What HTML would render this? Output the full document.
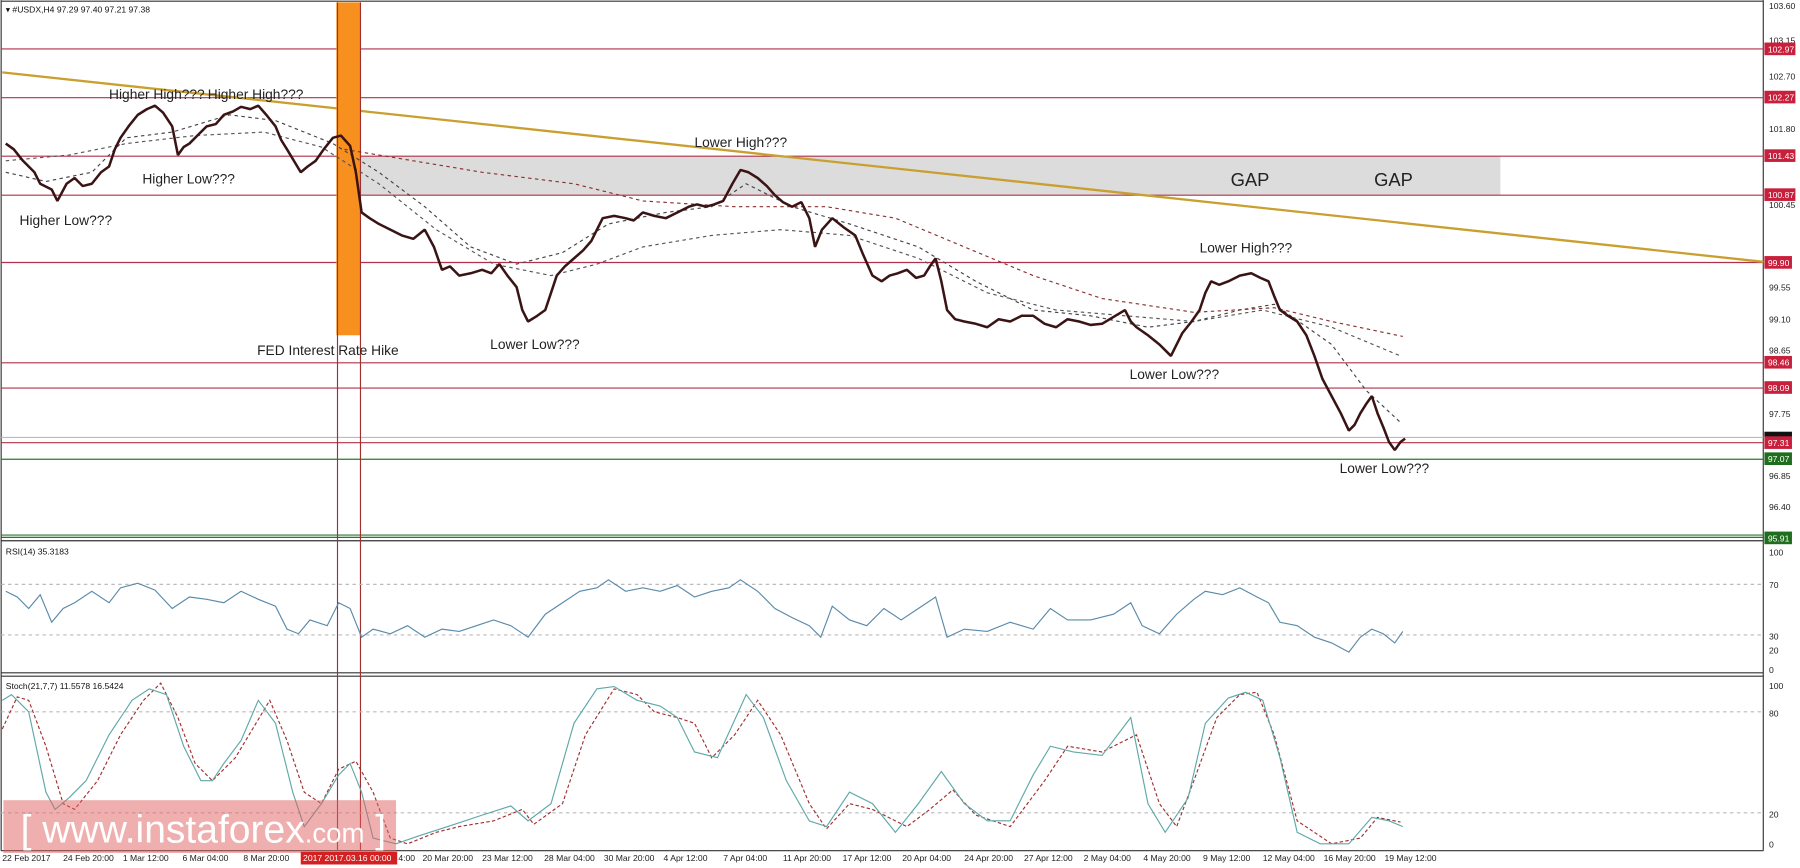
<!DOCTYPE html>
<html><head><meta charset="utf-8"><style>
html,body{margin:0;padding:0;background:#fff;width:1800px;height:868px;overflow:hidden}
svg{display:block}
text{font-family:"Liberation Sans",sans-serif}
</style></head><body>
<svg width="1800" height="868" viewBox="0 0 1568 756" xmlns="http://www.w3.org/2000/svg">
<rect width="1568" height="756" fill="#fff"/>
<g stroke="#333" stroke-width="1" fill="none">
<line x1="1536" y1="0" x2="1536" y2="741"/>
<line x1="1" y1="0" x2="1" y2="741"/>
<line x1="1" y1="741" x2="1536" y2="741"/>
<line x1="1" y1="1" x2="1536" y2="1"/>
</g>
<line x1="1" y1="468" x2="1536" y2="468" stroke="#1a5a1a" stroke-width="1"/>
<line x1="1" y1="471" x2="1536" y2="471" stroke="#333"/>
<line x1="1" y1="586" x2="1536" y2="586" stroke="#333"/>
<line x1="1" y1="589" x2="1536" y2="589" stroke="#333"/>

<rect x="314" y="136" width="993" height="34" fill="#dcdcdc"/>
<g stroke="#b0324a" stroke-width="1">
<line x1="1" y1="42.6" x2="1536" y2="42.6"/>
<line x1="1" y1="85" x2="1536" y2="85"/>
<line x1="1" y1="136" x2="1536" y2="136"/>
<line x1="1" y1="170" x2="1536" y2="170"/>
<line x1="1" y1="228.6" x2="1536" y2="228.6"/>
<line x1="1" y1="316" x2="1536" y2="316"/>
<line x1="1" y1="338" x2="1536" y2="338"/>
<line x1="1" y1="385.6" x2="1536" y2="385.6"/>
</g>
<line x1="1" y1="381" x2="1536" y2="381" stroke="#bbb"/>
<line x1="1" y1="400" x2="1536" y2="400" stroke="#2a7a2a"/>
<line x1="1" y1="466" x2="1536" y2="466" stroke="#2a7a2a"/>
<line x1="2" y1="63" x2="1536" y2="228" stroke="#c9a030" stroke-width="2"/>
<rect x="293" y="2" width="21" height="290" fill="#f7901e"/>
<g stroke="#a03030" stroke-width="1">
<line x1="294" y1="2" x2="294" y2="741"/>
<line x1="314" y1="2" x2="314" y2="741"/>
</g>
<g fill="none" stroke-dasharray="3,3" stroke-width="1">
<polyline stroke="#444" points="5,150 40,158 80,150 110,120 150,115 200,100 240,105 290,125 330,150 370,180 410,215 450,230 490,220 530,195 580,185 620,180 650,160 690,180 740,195 800,215 850,245 900,270 950,275 1000,285 1040,280 1080,270 1110,265 1160,300 1190,340 1220,368"/>
<polyline stroke="#555" points="5,140 60,135 110,125 170,118 230,115 280,128 330,160 380,200 430,230 480,240 520,230 560,215 620,205 680,200 740,205 800,225 860,255 920,270 980,275 1040,280 1100,270 1160,285 1220,310"/>
<polyline stroke="#8a3030" points="300,130 360,140 420,150 500,160 560,175 640,180 720,180 780,190 840,215 900,240 960,260 1040,272 1110,268 1160,280 1222,293"/>
</g>
<polyline fill="none" stroke="#3a1414" stroke-width="2.2" stroke-linejoin="bevel" points="5,125 12,130 20,140 30,150 35,160 45,165 50,175 58,160 65,155 72,162 80,160 88,150 95,145 100,130 105,120 112,110 120,100 128,95 135,92 142,98 150,110 155,135 160,128 165,125 172,118 180,110 188,108 195,100 203,97 210,93 218,95 225,92 232,100 240,110 245,122 250,130 256,140 262,150 268,145 275,140 282,130 290,120 297,118 305,127 310,150 315,185 322,190 330,195 340,200 350,205 360,208 370,200 378,215 385,235 392,232 400,240 410,238 420,235 428,238 435,230 442,240 450,250 455,270 460,280 468,275 475,270 480,255 485,240 492,232 500,225 508,218 515,210 520,200 525,190 535,188 545,190 552,192 560,185 570,188 580,190 590,185 600,180 607,178 615,180 622,178 630,175 638,160 645,148 652,150 660,155 668,162 675,170 682,176 690,180 698,176 705,190 708,205 710,215 716,200 725,190 735,198 745,205 752,222 760,240 768,245 775,240 782,238 790,235 798,242 805,240 810,232 815,225 820,245 825,270 832,278 840,280 850,282 860,285 870,278 880,280 890,275 900,275 910,282 920,285 930,278 940,280 950,283 960,282 970,276 980,270 985,280 990,285 1000,292 1010,300 1015,305 1020,310 1025,300 1030,290 1038,280 1045,270 1050,255 1055,245 1062,248 1070,245 1080,240 1090,238 1098,242 1105,245 1110,258 1115,270 1122,275 1130,280 1138,292 1145,310 1152,330 1160,345 1168,360 1175,375 1180,370 1185,360 1190,352 1195,345 1200,360 1205,372 1210,385 1215,392 1220,385 1224,382"/>

<g font-size="12" fill="#222">
<text x="95" y="86">Higher High???</text>
<text x="181" y="86">Higher High???</text>
<text x="124" y="160">Higher Low???</text>
<text x="17" y="196">Higher Low???</text>
<text x="605" y="128">Lower High???</text>
<text x="1045" y="220">Lower High???</text>
<text x="427" y="304">Lower Low???</text>
<text x="984" y="330">Lower Low???</text>
<text x="1167" y="412">Lower Low???</text>
<text x="224" y="309">FED Interest Rate Hike</text>
</g>
<g font-size="16" fill="#222">
<text x="1072" y="162">GAP</text>
<text x="1197" y="162">GAP</text>
</g>
<text x="5" y="11" font-size="7.5" fill="#111">▾ #USDX,H4  97.29 97.40 97.21 97.38</text>

<g font-size="7.5" fill="#222">
<text x="1541" y="8">103.60</text>
<text x="1541" y="38">103.15</text>
<text x="1541" y="69">102.70</text>
<text x="1541" y="115">101.80</text>
<text x="1541" y="181">100.45</text>
<text x="1541" y="253">99.55</text>
<text x="1541" y="281">99.10</text>
<text x="1541" y="308">98.65</text>
<text x="1541" y="363">97.75</text>
<text x="1541" y="417">96.85</text>
<text x="1541" y="444">96.40</text>
<text x="1541" y="484">100</text>
<text x="1541" y="512">70</text>
<text x="1541" y="557">30</text>
<text x="1541" y="569">20</text>
<text x="1541" y="586">0</text>
<text x="1541" y="600">100</text>
<text x="1541" y="624">80</text>
<text x="1541" y="712">20</text>
<text x="1541" y="738">0</text>
</g>
<g font-size="7.5" fill="#fff">
<rect x="1537" y="37" width="27" height="11" fill="#c8203c"/><text x="1540" y="45.5">102.97</text>
<rect x="1537" y="79" width="27" height="11" fill="#c8203c"/><text x="1540" y="87.5">102.27</text>
<rect x="1537" y="130" width="27" height="11" fill="#c8203c"/><text x="1540" y="138.5">101.43</text>
<rect x="1537" y="164" width="27" height="11" fill="#c8203c"/><text x="1540" y="172.5">100.87</text>
<rect x="1537" y="223" width="24" height="11" fill="#c8203c"/><text x="1540" y="231.5">99.90</text>
<rect x="1537" y="310" width="24" height="11" fill="#c8203c"/><text x="1540" y="318.5">98.46</text>
<rect x="1537" y="332" width="24" height="11" fill="#c8203c"/><text x="1540" y="340.5">98.09</text>
<rect x="1537" y="376" width="24" height="6" fill="#111"/>
<rect x="1537" y="380" width="24" height="11" fill="#c8203c"/><text x="1540" y="388.5">97.31</text>
<rect x="1537" y="394" width="24" height="11" fill="#1e6e1e"/><text x="1540" y="402.5">97.07</text>
<rect x="1537" y="463" width="24" height="11" fill="#1e6e1e"/><text x="1540" y="471.5">95.91</text>
</g>

<g stroke="#bbb" stroke-dasharray="3,3"><line x1="1" y1="509" x2="1536" y2="509"/><line x1="1" y1="553" x2="1536" y2="553"/></g>
<text x="5" y="483" font-size="7.5" fill="#111">RSI(14) 35.3183</text>
<polyline fill="none" stroke="#5a8aaa" stroke-width="1" points="5,515 15,520 25,530 35,518 45,542 55,530 65,525 80,515 95,525 105,512 120,508 135,514 150,530 165,520 180,522 195,525 210,515 225,522 240,528 250,548 260,552 270,540 285,545 295,525 305,530 315,555 325,548 340,552 355,545 370,555 385,548 400,550 415,545 430,540 445,545 460,555 475,535 490,525 505,515 520,512 530,505 545,515 560,512 575,515 590,510 605,520 620,515 635,512 645,505 660,515 675,530 690,538 705,545 715,555 725,528 740,540 755,545 770,530 785,540 800,530 815,520 825,555 840,548 860,550 880,542 900,548 915,530 930,540 950,540 970,535 985,525 995,545 1010,552 1025,535 1040,522 1050,515 1065,518 1080,512 1095,520 1105,525 1115,542 1130,545 1145,555 1160,560 1175,568 1185,555 1195,548 1205,552 1215,560 1222,550"/>

<g stroke="#bbb" stroke-dasharray="3,3"><line x1="1" y1="620" x2="1536" y2="620"/><line x1="1" y1="708" x2="1536" y2="708"/></g>
<text x="5" y="600" font-size="7.5" fill="#111">Stoch(21,7,7) 11.5578 16.5424</text>
<polyline fill="none" stroke="#a03030" stroke-dasharray="3,2" points="2,635 15,607 25,610 40,650 55,700 65,705 85,680 105,640 125,610 140,595 155,625 170,665 185,680 205,660 220,635 235,610 250,645 265,690 280,700 295,670 310,663 325,690 340,730 355,735 380,725 400,720 430,715 455,705 465,718 490,700 510,640 535,600 555,605 570,620 590,625 605,630 620,660 640,640 660,610 680,640 705,700 720,722 740,700 760,705 790,720 810,705 830,688 850,710 880,720 910,680 930,650 960,655 990,640 1010,700 1025,720 1040,680 1060,625 1080,605 1095,603 1110,640 1130,715 1160,735 1185,730 1200,712 1220,716"/>
<polyline fill="none" stroke="#5fa8a8" stroke-width="1" points="2,610 10,605 25,620 40,690 48,705 60,695 75,680 95,640 115,610 130,600 145,605 160,650 175,680 185,680 195,665 210,645 225,610 240,630 255,690 265,720 280,700 295,675 305,665 315,690 325,730 345,735 365,728 390,720 420,710 445,702 460,715 480,700 500,630 520,600 535,598 555,610 575,615 590,625 605,655 625,660 650,605 665,625 685,680 705,715 720,720 740,690 760,700 780,725 800,700 820,672 840,700 860,715 880,715 900,675 915,650 935,655 960,658 985,625 1000,700 1015,725 1035,695 1050,630 1070,608 1085,603 1100,610 1115,660 1130,725 1150,735 1175,735 1195,712 1210,715 1222,720"/>

<rect x="3" y="697" width="342" height="46" fill="#e06060" fill-opacity="0.5"/>
<text x="18" y="734" font-size="34" fill="#fff">[ www.instaforex<tspan font-size="24">.com</tspan> ]</text>

<rect x="262" y="742" width="84" height="11" fill="#d42020"/>
<g font-size="7.5" fill="#222">
<text x="2" y="750">22 Feb 2017</text>
<text x="55" y="750">24 Feb 20:00</text>
<text x="107" y="750">1 Mar 12:00</text>
<text x="159" y="750">6 Mar 04:00</text>
<text x="212" y="750">8 Mar 20:00</text>
<text x="264" y="750" fill="#fff">2017 2017.03.16 00:00</text>
<text x="347" y="750">4:00</text>
<text x="368" y="750">20 Mar 20:00</text>
<text x="420" y="750">23 Mar 12:00</text>
<text x="474" y="750">28 Mar 04:00</text>
<text x="526" y="750">30 Mar 20:00</text>
<text x="578" y="750">4 Apr 12:00</text>
<text x="630" y="750">7 Apr 04:00</text>
<text x="682" y="750">11 Apr 20:00</text>
<text x="734" y="750">17 Apr 12:00</text>
<text x="786" y="750">20 Apr 04:00</text>
<text x="840" y="750">24 Apr 20:00</text>
<text x="892" y="750">27 Apr 12:00</text>
<text x="944" y="750">2 May 04:00</text>
<text x="996" y="750">4 May 20:00</text>
<text x="1048" y="750">9 May 12:00</text>
<text x="1100" y="750">12 May 04:00</text>
<text x="1153" y="750">16 May 20:00</text>
<text x="1206" y="750">19 May 12:00</text>
</g>
</svg>
</body></html>
